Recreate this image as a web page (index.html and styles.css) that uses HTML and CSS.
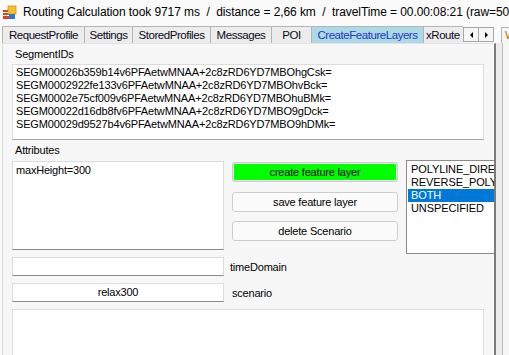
FILE: index.html
```html
<!DOCTYPE html>
<html>
<head>
<meta charset="utf-8">
<link rel="stylesheet" href="styles.css">
</head>
<body>
<div class="app">
  <header class="title">
    <svg class="appicon" width="16" height="16" viewBox="0 0 16 16">
      <rect x="1" y="6" width="6" height="9" fill="#e04020"/>
      <rect x="1" y="8" width="6" height="1" fill="#ffffff"/>
      <rect x="1" y="11" width="6" height="1" fill="#ffffff"/>
      <rect x="6" y="2" width="8" height="8" fill="#f2c230" stroke="#c89a10" stroke-width="0.8"/>
      <rect x="7" y="10" width="6" height="5" fill="#2f78d8"/>
    </svg>
    <span class="title-text">Routing Calculation took 9717 ms  /  distance = 2,66 km  /  travelTime = 00.00:08:21 (raw=501)</span>
  </header>
  <div class="workspace">
    <div class="tabctl">
      <div class="tabstrip">
        <div class="tabs">
          <div class="tab w-req">RequestProfile</div>
          <div class="tab w-set">Settings</div>
          <div class="tab w-sto">StoredProfiles</div>
          <div class="tab w-msg">Messages</div>
          <div class="tab w-poi">POI</div>
          <div class="tab w-cfl active">CreateFeatureLayers</div>
          <div class="tab w-xr">xRoute</div>
        </div>
        <div class="arrows">
          <div class="arrow"><span class="tri-left"></span></div>
          <div class="arrow"><span class="tri-right"></span></div>
        </div>
      </div>
      <div class="tabpage">
        <div class="label">SegmentIDs</div>
        <div class="box segbox">SEGM00026b359b14v6PFAetwMNAA+2c8zRD6YD7MBOhgCsk=
SEGM0002922fe133v6PFAetwMNAA+2c8zRD6YD7MBOhvBck=
SEGM0002e75cf009v6PFAetwMNAA+2c8zRD6YD7MBOhuBMk=
SEGM00022d16db8fv6PFAetwMNAA+2c8zRD6YD7MBO9gDck=
SEGM00029d9527b4v6PFAetwMNAA+2c8zRD6YD7MBO9hDMk=</div>
        <div class="label label-attr">Attributes</div>
        <div class="attrrow">
          <div class="box attrbox">maxHeight=300</div>
          <div class="buttons">
            <div class="btn btn-green"><span>create feature layer</span></div>
            <div class="btn"><span>save feature layer</span></div>
            <div class="btn btn-last"><span>delete Scenario</span></div>
          </div>
          <div class="listbox">
            <div class="item">POLYLINE_DIRECTION</div>
            <div class="item">REVERSE_POLYLINE_DIRECTION</div>
            <div class="item selected">BOTH</div>
            <div class="item">UNSPECIFIED</div>
          </div>
        </div>
        <div class="fieldrow row-time">
          <div class="box field"></div>
          <div class="fieldlabel">timeDomain</div>
        </div>
        <div class="fieldrow row-scen">
          <div class="box field centered">relax300</div>
          <div class="fieldlabel label-scen">scenario</div>
        </div>
        <div class="box bottombox"></div>
      </div>
    </div>
    <div class="sidectl">
      <div class="sidetabs"><div class="sidetab">W</div></div>
      <div class="sidepage"><div class="sideinner"></div></div>
    </div>
  </div>
</div>
</body>
</html>
```

FILE: styles.css
```css
* { box-sizing: border-box; }
html, body { margin: 0; padding: 0; }
body {
  width: 509px;
  height: 355px;
  overflow: hidden;
  background: #fafafa;
  font-family: "Liberation Sans", Arial, sans-serif;
  color: #000;
}
.app { width: 509px; height: 355px; display: flex; flex-direction: column; }

.title {
  height: 26px;
  flex: none;
  display: flex;
  align-items: center;
  gap: 5px;
  padding: 0 0 2px 2px;
  font-size: 12px;
  white-space: pre;
  overflow: hidden;
}
.appicon { flex: none; }
.title-text { white-space: pre; letter-spacing: -0.08px; }

.workspace { flex: 1; display: flex; min-height: 0; }
.tabctl { width: 496px; flex: none; display: flex; flex-direction: column; }

.tabstrip { height: 17px; flex: none; display: flex; padding-left: 2px; }
.tabs { display: flex; width: 461px; overflow: hidden; flex: none; }
.tab {
  flex: none;
  height: 17px;
  line-height: 16px;
  text-align: center;
  font-size: 11.5px;
  letter-spacing: -0.45px;
  background: #ececec;
  border: 1px solid #b4b4b4;
  border-bottom: none;
  margin-right: -1px;
  white-space: nowrap;
  color: #0a0a20;
}
.tab.active { background: #add8e6; color: #1d3bbd; }
.w-req { width: 83px; }
.w-set { width: 49px; }
.w-sto { width: 79px; }
.w-msg { width: 62px; }
.w-poi { width: 41px; }
.w-cfl { width: 113px; }
.w-xr { width: 50px; text-align: left; padding-left: 2px; }

.arrows { display: flex; padding-top: 1px; margin-left: 0; }
.arrow {
  width: 16px;
  height: 15px;
  border: 1px solid #a8a8a8;
  background: #f6f6f6;
  display: flex;
  align-items: center;
  justify-content: center;
  margin-right: -1px;
}
.tri-left, .tri-right { width: 0; height: 0; border-top: 3px solid transparent; border-bottom: 3px solid transparent; }
.tri-left { border-right: 3px solid #000; }
.tri-right { border-left: 3px solid #000; }

.tabpage {
  flex: 1;
  min-height: 0;
  margin-left: 2px;
  background: #f7f7f7;
  border-left: 1px solid #dadada;
  border-top: 1px solid #e2e2e2;
  border-right: 2px solid #7b7b7b;
  overflow: hidden;
  padding: 3px 0 0 9px;
  font-size: 11px;
  letter-spacing: -0.2px;
}

.label { height: 15px; line-height: 15px; padding-left: 3px; margin-bottom: 2px; }
.label-attr { margin-top: 3px; }

.box {
  background: #fff;
  border: 1px solid #dcdcdc;
  border-bottom-color: #8a8a8a;
}
.segbox {
  width: 472px;
  height: 76px;
  padding: 1px 0 0 3px;
  line-height: 13px;
  white-space: pre;
  letter-spacing: -0.15px;
  border-bottom-color: #a6a6a6;
}

.attrrow { display: flex; gap: 8px; height: 94px; align-items: flex-start; }
.attrbox {
  width: 212px;
  height: 89px;
  margin-top: 1px;
  padding: 2px 0 0 3px;
  line-height: 13px;
  flex: none;
}
.buttons { width: 166px; flex: none; display: flex; flex-direction: column; gap: 10px; padding-top: 2px; }
.btn {
  height: 20px;
  border: 1px solid #cdcdcd;
  border-radius: 3px;
  background: #fbfbfb;
  display: flex;
  align-items: center;
  justify-content: center;
}
.btn-last { margin-top: -1px; }
.btn-green { background: #00ff00; box-shadow: inset 0 0 0 1px #f4f4f4; }
.listbox {
  flex: none;
  width: 112px;
  height: 94px;
  border: 1px solid #8c8c8c;
  background: #fff;
  padding: 2px 1px 0 1px;
  letter-spacing: -0.1px;
  white-space: nowrap;
  overflow: hidden;
}
.item { height: 13px; line-height: 13px; padding-left: 3px; }
.item.selected { background: #0078d7; color: #fff; }

.fieldrow { display: flex; align-items: center; gap: 6px; }
.row-time { margin-top: 3px; }
.row-scen { margin-top: 7px; }
.field { width: 212px; height: 19px; flex: none; line-height: 17px; }
.centered { text-align: center; }
.label-scen { padding-left: 2px; }

.bottombox {
  margin-top: 7px;
  width: 472px;
  height: 80px;
  border-bottom: none;
}

.sidectl { flex: 1; display: flex; flex-direction: column; overflow: hidden; }
.sidetabs { height: 17px; flex: none; padding-left: 5px; padding-top: 1px; }
.sidetab {
  height: 16px;
  border-left: 1px solid #b4b4b4;
  border-top: 1px solid #b4b4b4;
  background: #f4f4f4;
  padding-left: 3px;
  font-size: 11.5px;
  line-height: 15px;
  color: #b08000;
  overflow: hidden;
}
.sidepage { flex: 1; background: #ececec; padding-left: 6px; }
.sideinner { height: 100%; border-left: 1px solid #bdbdbd; background: #f6f6f6; }
```
